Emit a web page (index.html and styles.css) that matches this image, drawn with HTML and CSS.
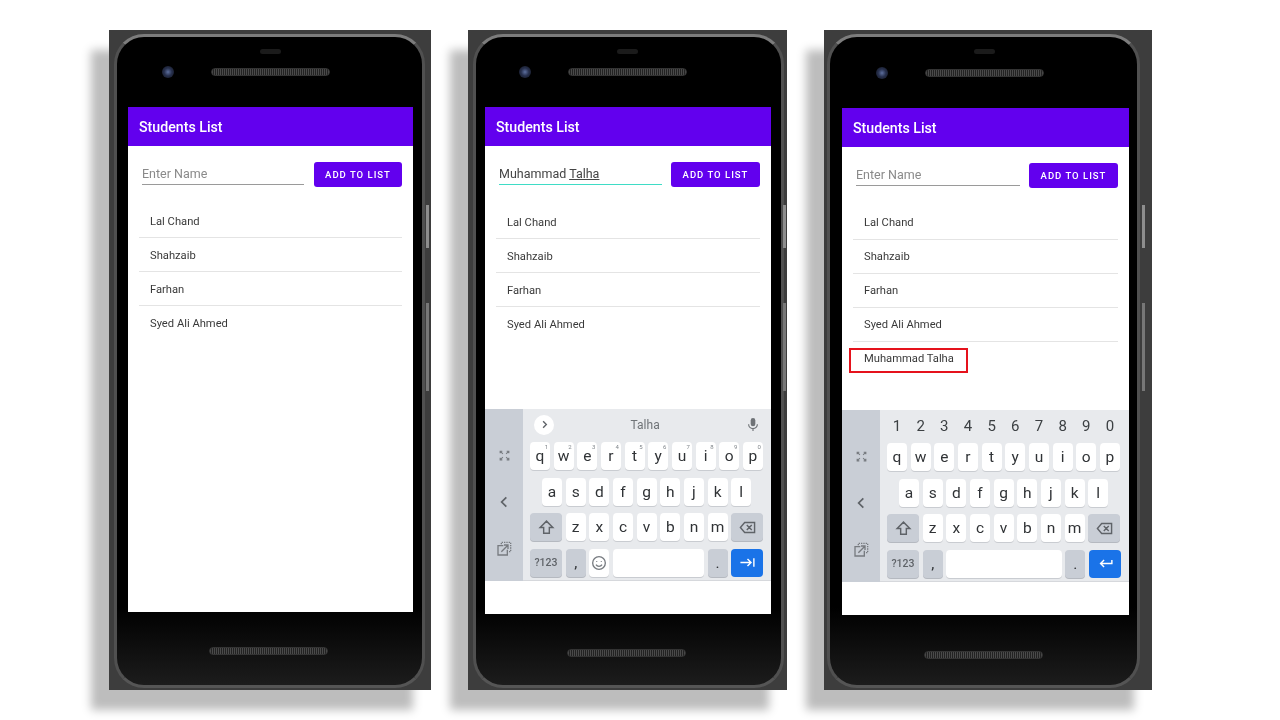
FILE: index.html
```html
<!DOCTYPE html>
<html lang="en">
<head>
  <meta charset="UTF-8">
  <title>Students List</title>
  <link rel="stylesheet" href="styles.css">
</head>
<body>
  <!-- shared keyboard icons -->
  <svg class="icon-defs">
    <symbol id="i-expand" viewBox="0 0 24 24"><path d="M9 9 4 4M4 8V4h4M15 9l5-5M16 4h4v4M9 15l-5 5M4 16v4h4M15 15l5 5M20 16v4h-4"/></symbol>
    <symbol id="i-back" viewBox="0 0 24 24"><path d="M16 4 8 12l8 8"/></symbol>
    <symbol id="i-popout" viewBox="0 0 24 24"><path d="M11 7H3v14h14v-8M8 16l9-9M12 6h6v6"/><path class="dash" d="M8 5V2h14v14h-3"/></symbol>
    <symbol id="i-shift" viewBox="0 0 24 24"><path d="M12 3 3 12h5v8h8v-8h5z"/></symbol>
    <symbol id="i-del" viewBox="0 0 24 24"><path d="M8 5h14v14H8l-6-7zM11 8.500l7 7M18 8.500l-7 7"/></symbol>
    <symbol id="i-tab" viewBox="0 0 24 24"><path d="M2 12h15M12 7l5 5-5 5M21 6v12"/></symbol>
    <symbol id="i-enter" viewBox="0 0 24 24"><path d="M21 7v5H5M10 7l-5 5 5 5"/></symbol>
    <symbol id="i-smile" viewBox="0 0 24 24"><circle cx="12" cy="12" r="9.500"/><path d="M7.500 14.500c2 3.500 7 3.500 9 0M8.500 9v1M15.500 9v1"/></symbol>
    <symbol id="i-more" viewBox="0 0 24 24"><path d="M9 5l7 7-7 7"/></symbol>
    <symbol id="i-mic" viewBox="0 0 24 24"><rect class="solid" x="8" y="1" width="8" height="14" rx="4"/><path d="M4.500 11.500a7.500 7.500 0 0 0 15 0M12 19v4"/></symbol>
  </svg>

  <div class="gallery">

    <div class="phone phone-a">
      <div class="frame-btn btn-top"></div>
      <div class="frame-btn btn-low"></div>
      <div class="bezel">
        <div class="top-bar">
          <span class="notch"></span>
          <span class="camera"></span>
          <span class="speaker"></span>
        </div>
        <div class="screen">
          <div class="appbar">Students List</div>
          <div class="form">
            <div class="field">Enter Name</div>
            <div class="add-btn">ADD TO LIST</div>
          </div>
          <ul class="students">
            <li>Lal Chand</li>
            <li>Shahzaib</li>
            <li>Farhan</li>
            <li class="last">Syed Ali Ahmed</li>
          </ul>
        </div>
        <div class="bottom-bar"><span class="speaker"></span></div>
      </div>
    </div>

    <div class="phone phone-b">
      <div class="frame-btn btn-top"></div>
      <div class="frame-btn btn-low"></div>
      <div class="bezel">
        <div class="top-bar">
          <span class="notch"></span>
          <span class="camera"></span>
          <span class="speaker"></span>
        </div>
        <div class="screen">
          <div class="appbar">Students List</div>
          <div class="form">
            <div class="field filled">Muhammad <u>Talha</u></div>
            <div class="add-btn">ADD TO LIST</div>
          </div>
          <ul class="students">
            <li>Lal Chand</li>
            <li>Shahzaib</li>
            <li>Farhan</li>
            <li class="last">Syed Ali Ahmed</li>
          </ul>
          <div class="keyboard">
            <div class="kb-side">
              <svg class="ico small"><use href="#i-expand"/></svg>
              <svg class="ico back"><use href="#i-back"/></svg>
              <svg class="ico"><use href="#i-popout"/></svg>
            </div>
            <div class="kb-main">
              <div class="suggest">
                <span class="more"><svg class="ico tiny"><use href="#i-more"/></svg></span>
                <span class="word">Talha</span>
                <svg class="ico mic"><use href="#i-mic"/></svg>
              </div>
              <div class="kb-row">
                <span class="key" data-n="1">q</span><span class="key" data-n="2">w</span><span class="key" data-n="3">e</span><span class="key" data-n="4">r</span><span class="key" data-n="5">t</span><span class="key" data-n="6">y</span><span class="key" data-n="7">u</span><span class="key" data-n="8">i</span><span class="key" data-n="9">o</span><span class="key" data-n="0">p</span>
              </div>
              <div class="kb-row inset">
                <span class="key">a</span><span class="key">s</span><span class="key">d</span><span class="key">f</span><span class="key">g</span><span class="key">h</span><span class="key">j</span><span class="key">k</span><span class="key">l</span>
              </div>
              <div class="kb-row">
                <span class="key wide gray"><svg class="ico"><use href="#i-shift"/></svg></span>
                <span class="key">z</span><span class="key">x</span><span class="key">c</span><span class="key">v</span><span class="key">b</span><span class="key">n</span><span class="key">m</span>
                <span class="key wide gray"><svg class="ico"><use href="#i-del"/></svg></span>
              </div>
              <div class="kb-row">
                <span class="key wide gray sym">?123</span>
                <span class="key gray">,</span>
                <span class="key"><svg class="ico"><use href="#i-smile"/></svg></span>
                <span class="key space"></span>
                <span class="key gray">.</span>
                <span class="key wide action"><svg class="ico"><use href="#i-tab"/></svg></span>
              </div>
            </div>
          </div>
        </div>
        <div class="bottom-bar"><span class="speaker"></span></div>
      </div>
    </div>

    <div class="phone phone-c">
      <div class="frame-btn btn-top"></div>
      <div class="frame-btn btn-low"></div>
      <div class="bezel">
        <div class="top-bar">
          <span class="notch"></span>
          <span class="camera"></span>
          <span class="speaker"></span>
        </div>
        <div class="screen">
          <div class="appbar">Students List</div>
          <div class="form">
            <div class="field">Enter Name</div>
            <div class="add-btn">ADD TO LIST</div>
          </div>
          <ul class="students">
            <li>Lal Chand</li>
            <li>Shahzaib</li>
            <li>Farhan</li>
            <li>Syed Ali Ahmed</li>
            <li class="last marked">Muhammad Talha</li>
          </ul>
          <div class="keyboard">
            <div class="kb-side">
              <svg class="ico small"><use href="#i-expand"/></svg>
              <svg class="ico back"><use href="#i-back"/></svg>
              <svg class="ico"><use href="#i-popout"/></svg>
            </div>
            <div class="kb-main">
              <div class="digits">
                <span>1</span><span>2</span><span>3</span><span>4</span><span>5</span><span>6</span><span>7</span><span>8</span><span>9</span><span>0</span>
              </div>
              <div class="kb-row">
                <span class="key">q</span><span class="key">w</span><span class="key">e</span><span class="key">r</span><span class="key">t</span><span class="key">y</span><span class="key">u</span><span class="key">i</span><span class="key">o</span><span class="key">p</span>
              </div>
              <div class="kb-row inset">
                <span class="key">a</span><span class="key">s</span><span class="key">d</span><span class="key">f</span><span class="key">g</span><span class="key">h</span><span class="key">j</span><span class="key">k</span><span class="key">l</span>
              </div>
              <div class="kb-row">
                <span class="key wide gray"><svg class="ico"><use href="#i-shift"/></svg></span>
                <span class="key">z</span><span class="key">x</span><span class="key">c</span><span class="key">v</span><span class="key">b</span><span class="key">n</span><span class="key">m</span>
                <span class="key wide gray"><svg class="ico"><use href="#i-del"/></svg></span>
              </div>
              <div class="kb-row">
                <span class="key wide gray sym">?123</span>
                <span class="key gray">,</span>
                <span class="key space"></span>
                <span class="key gray">.</span>
                <span class="key wide action"><svg class="ico"><use href="#i-enter"/></svg></span>
              </div>
            </div>
          </div>
        </div>
        <div class="bottom-bar"><span class="speaker"></span></div>
      </div>
    </div>

  </div>
</body>
</html>
```

FILE: styles.css
```css
*, *::after {
  box-sizing: border-box;
}

body {
  margin: 0;
  background: #fff;
  font-family: 'Roboto', sans-serif;
  overflow: hidden;
}

.icon-defs {
  display: none;
}

.gallery {
  display: flex;
  align-items: flex-start;
  gap: 37px;
  height: 720px;
  padding: 30px 0 0 109px;
  filter: blur(0.35px);
}

/* phone body */
.phone {
  position: relative;
  height: 660px;
  background: #3d3d3d;
  box-shadow: -18px 20px 9px #bdbdbd;
}

.phone-a { width: 322px; padding: 4px 6px 2px 5px; }
.phone-b { width: 319px; padding: 4px 3px 2px 5px; }
.phone-c { width: 328px; padding: 4px 12px 2px 3px; }

.frame-btn {
  position: absolute;
  right: 2px;
  width: 3px;
  background: #8d8d8d;
}

.phone-b .frame-btn { right: 1px; }
.phone-c .frame-btn { right: 7px; }

.btn-top { top: 175px; height: 43px; }
.btn-low { top: 273px; height: 88px; background: #777; }

.bezel {
  display: flex;
  flex-direction: column;
  height: 100%;
  border: 3px solid #505050;
  border-top-color: #7c7c7c;
  border-bottom-color: #555;
  border-radius: 30px;
  background: linear-gradient(#000 88%, #1c1c1c);
}

.phone-a .bezel { padding: 0 9px 0 11px; }
.phone-b .bezel { padding: 0 10px 0 9px; }
.phone-c .bezel { padding: 0 8px 0 12px; }

.top-bar {
  position: relative;
  display: flex;
  align-items: center;
  flex: none;
  height: 70px;
  padding-left: 34px;
}

.phone-c .top-bar { height: 71px; }

.notch {
  position: absolute;
  top: 12px;
  left: 132px;
  width: 21px;
  height: 5px;
  border-radius: 3px;
  background: #1b1b1b;
}

.camera {
  width: 12px;
  height: 12px;
  border-radius: 50%;
  background: radial-gradient(circle, #5d6f9e 0, #27304d 45%, #12141d 100%);
}

.speaker {
  display: block;
  width: 119px;
  height: 8px;
  border-radius: 4px;
  border: 1px solid #333;
  background: repeating-linear-gradient(90deg, #4a4a4a 0, #4a4a4a 1px, #222 1px, #222 2px);
}

.top-bar .speaker {
  margin-left: 37px;
}

.bottom-bar {
  display: flex;
  align-items: center;
  flex: none;
}

.phone-a .bottom-bar { height: 73px; padding: 4px 0 0 81px; }
.phone-b .bottom-bar { height: 71px; padding: 7px 0 0 82px; }
.phone-c .bottom-bar { height: 70px; padding: 10px 0 0 82px; }

/* app screen */
.screen {
  display: flex;
  flex-direction: column;
  flex: 1;
  min-height: 0;
  background: #fff;
}

.appbar {
  flex: none;
  height: 39px;
  padding: 0 11px;
  background: #6200ee;
  color: #fff;
  font-size: 14.200px;
  font-weight: 500;
  line-height: 40px;
}

.form {
  display: flex;
  gap: 9px;
  flex: none;
  padding: 16px 11px 0 14px;
}

.phone-a .form {
  gap: 10px;
}

.field {
  flex: 1;
  height: 23px;
  border-bottom: 1px solid #9a9a9a;
  color: #8a8a8a;
  font-size: 12.500px;
  line-height: 23px;
}

.field.filled {
  border-bottom: 1.500px solid #3fdcc6;
  color: #444;
}

.add-btn {
  width: 89px;
  height: 25px;
  border-radius: 3px;
  background: #6200ee;
  color: #fff;
  font-size: 9.500px;
  font-weight: 500;
  letter-spacing: 1px;
  line-height: 26px;
  text-align: center;
}

.phone-a .add-btn {
  width: 88px;
}

.students {
  flex: none;
  margin: 18px 11px 0;
  padding: 0;
  list-style: none;
}

.phone-a .students {
  margin-top: 17px;
}

.students li {
  height: 34px;
  padding-left: 11px;
  border-bottom: 1px solid #e4e4e4;
  color: #3a3a3a;
  font-size: 11.200px;
  line-height: 34px;
}

.phone-a .students li,
.phone-b .students li {
  line-height: 36px;
}

.students li.last {
  border-bottom: none;
}

.marked {
  position: relative;
}

/* red highlight box drawn over the new row */
.marked::after {
  content: "";
  position: absolute;
  top: 6px;
  left: -4px;
  width: 119px;
  height: 25px;
  border: 2px solid #e5121c;
}

/* keyboard */
.keyboard {
  display: flex;
  flex: none;
  height: 172px;
  margin-top: auto;
  margin-bottom: 33px;
}

.kb-side {
  display: flex;
  flex-direction: column;
  align-items: center;
  justify-content: space-between;
  flex: none;
  width: 38px;
  padding: 40px 0 24px;
  background: #c9ced6;
}

.kb-main {
  flex: 1;
  padding: 0 8px 0 7px;
  background: #e8eaed;
  border-bottom: 1px solid #d6d8dc;
}

.suggest {
  display: flex;
  align-items: center;
  justify-content: space-between;
  height: 33px;
  padding: 0 3px 2px 4px;
}

.more {
  display: flex;
  align-items: center;
  justify-content: center;
  width: 20px;
  height: 20px;
  border-radius: 50%;
  background: #fff;
}

.word {
  margin-right: 10px;
  color: #6f7377;
  font-size: 12px;
}

.digits {
  display: flex;
  gap: 3.670px;
  height: 33px;
  color: #3c4043;
  font-size: 15px;
  line-height: 32px;
}

.digits span {
  width: 20px;
  text-align: center;
}

.kb-row {
  display: flex;
  gap: 3.670px;
  height: 28px;
  margin-bottom: 7.500px;
}

.kb-row.inset {
  padding-left: 12px;
}

.key {
  position: relative;
  display: flex;
  align-items: center;
  justify-content: center;
  flex: none;
  width: 20px;
  height: 28px;
  border-radius: 4px;
  background: #fff;
  box-shadow: 0 1px 0 #c9ccd1;
  color: #303336;
  font-size: 15.500px;
}

/* small number hint in the key corner */
.key[data-n]::after {
  content: attr(data-n);
  position: absolute;
  top: 1px;
  right: 2px;
  color: #80868b;
  font-size: 6px;
}

.key.wide {
  width: 32px;
}

.key.gray {
  background: #c9ced6;
  box-shadow: 0 1px 0 #b5b9c0;
}

.key.sym {
  font-size: 10.500px;
  font-weight: 500;
  color: #5f6368;
}

.key.space {
  flex: 1;
}

.key.action {
  background: #1a73e8;
  box-shadow: none;
}

.ico {
  width: 16px;
  height: 16px;
  fill: none;
  stroke: #777b80;
  stroke-width: 2;
}

.dash {
  stroke-dasharray: 2 1.500;
}

.ico.small { width: 13px; height: 13px; }
.ico.tiny { width: 11px; height: 11px; stroke: #5f6368; stroke-width: 3; }
.ico.back { width: 14px; height: 14px; stroke: #5f6368; stroke-width: 3; }
.ico.mic { width: 14px; height: 15px; stroke: #6f7377; }
.solid { fill: #6f7377; stroke: none; }
.key.wide .ico { width: 17px; height: 17px; stroke: #5f6368; }
.key.action .ico { stroke: #fff; }
```
